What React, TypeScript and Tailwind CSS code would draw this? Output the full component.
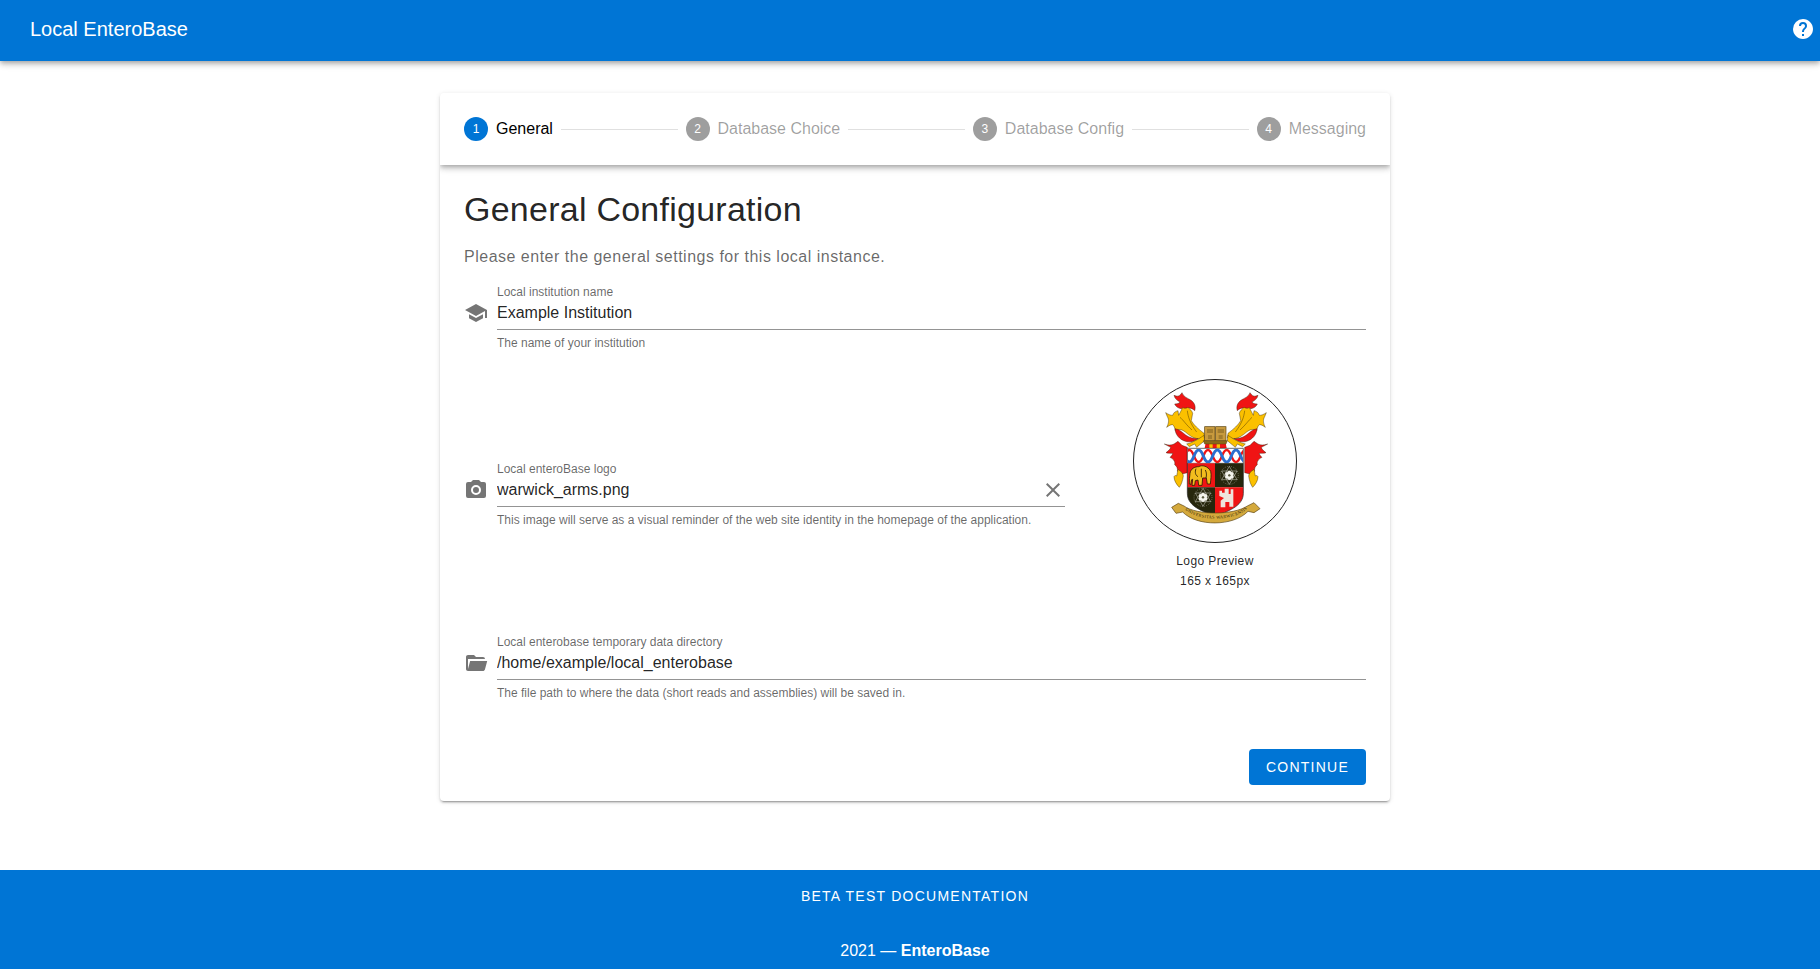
const ICONS = {
  school: 'M12,3L1,9L12,15L21,10.09V17H23V9M5,13.18V17.18L12,21L19,17.18V13.18L12,17L5,13.18Z',
  camera:
    'M4,4H7L9,2H15L17,4H20A2,2 0 0,1 22,6V18A2,2 0 0,1 20,20H4A2,2 0 0,1 2,18V6A2,2 0 0,1 4,4M12,7A5,5 0 0,0 7,12A5,5 0 0,0 12,17A5,5 0 0,0 17,12A5,5 0 0,0 12,7M12,9A3,3 0 0,1 15,12A3,3 0 0,1 12,15A3,3 0 0,1 9,12A3,3 0 0,1 12,9Z',
  folder:
    'M19,20H4C2.89,20 2,19.1 2,18V6C2,4.89 2.89,4 4,4H10L12,6H19A2,2 0 0,1 21,8H21L4,8V18L6.14,10H23.21L20.93,18.5C20.7,19.37 19.92,20 19,20Z',
  close:
    'M19,6.41L17.59,5L12,10.59L6.41,5L5,6.41L10.59,12L5,17.59L6.41,19L12,13.41L17.59,19L19,17.59L13.41,12L19,6.41Z',
  help: 'M15.07,11.25L14.17,12.17C13.45,12.89 13,13.5 13,15H11V14.5C11,13.39 11.45,12.39 12.17,11.67L13.41,10.41C13.78,10.05 14,9.55 14,9C14,7.89 13.1,7 12,7A2,2 0 0,0 10,9H8A4,4 0 0,1 12,5A4,4 0 0,1 16,9C16,9.88 15.64,10.67 15.07,11.25M13,19H11V17H13M12,2A10,10 0 0,0 2,12C2,17.52 6.48,22 12,22C17.52,22 22,17.52 22,12C22,6.47 17.5,2 12,2Z',
};

function Icon({ path, className }: { path: string; className: string }) {
  return (
    <svg viewBox="0 0 24 24" className={className} fill="currentColor">
      <path d={path} />
    </svg>
  );
}

const STEPS = ['General', 'Database Choice', 'Database Config', 'Messaging'];

function Stepper() {
  return (
    <div className="flex h-[72px] items-center gap-2 px-6 shadow-[0_2px_4px_-1px_rgba(0,0,0,0.2),0_4px_5px_0_rgba(0,0,0,0.14),0_1px_10px_0_rgba(0,0,0,0.12)] [clip-path:inset(0_0_-12px_0)]">
      {STEPS.map((step, index) => (
        <div key={step} className="contents">
          <span
            className={
              index === 0
                ? 'grid h-6 w-6 place-items-center rounded-full bg-[#0075d5] text-xs text-white'
                : 'grid h-6 w-6 place-items-center rounded-full bg-black/38 text-xs text-white'
            }
          >
            {index + 1}
          </span>
          <span className={index === 0 ? 'text-base text-black' : 'text-base text-black/38'}>{step}</span>
          {index < 3 ? <span className="h-px flex-1 bg-black/12" /> : null}
        </div>
      ))}
    </div>
  );
}

interface FieldProps {
  icon: string;
  label: string;
  value: string;
  hint: string;
  clearable?: boolean;
}

function Field({ icon, label, value, hint, clearable = false }: FieldProps) {
  return (
    <div className="flex flex-1 items-start gap-[9px]">
      <Icon path={icon} className="mt-[16px] h-6 w-6 shrink-0 text-black/54" />
      <div className="flex-1">
        <label className="block h-[15px] text-xs leading-[15px] text-black/60">{label}</label>
        <div className="flex h-[30px] items-center border-b border-black/42">
          <input
            readOnly
            value={value}
            className="h-full min-w-0 flex-1 bg-transparent pb-1 text-base text-black/87 outline-none"
          />
          {clearable ? <Icon path={ICONS.close} className="mb-1 h-6 w-6 shrink-0 text-black/54" /> : null}
        </div>
        <p className="mt-[6px] text-xs leading-[14px] text-black/60">{hint}</p>
      </div>
    </div>
  );
}

function CrestRose({ x, y }: { x: number; y: number }) {
  return (
    <g transform={`translate(${x} ${y})`}>
      <g fill="none" stroke="#d8d8d0" strokeWidth="1.5">
        <circle r="27" strokeDasharray="2 4" />
        <path d="M0 -27L23 13H-23ZM0 27L23 -13H-23Z" />
      </g>
      <g fill="#f4f4ec">
        <circle cx="0" cy="-8" r="6" />
        <circle cx="7" cy="-4" r="6" />
        <circle cx="7" cy="4" r="6" />
        <circle cx="0" cy="8" r="6" />
        <circle cx="-7" cy="4" r="6" />
        <circle cx="-7" cy="-4" r="6" />
      </g>
      <circle r="3.5" fill="#5a5a40" />
    </g>
  );
}

function Crest() {
  const mantling = (
    <g stroke="#2b1d05" strokeWidth="1.2" strokeLinejoin="round">
      {/* upper flame */}
      <path
        fill="#f01414"
        d="M222 76C232 80 238 80 246 68C250 80 262 84 272 90C284 98 288 110 284 122C276 114 266 112 254 116C240 118 228 112 224 102C232 102 238 100 240 96C232 92 224 86 222 76Z"
      />
      {/* yellow leaves */}
      <path
        fill="#fbc000"
        d="M197 128C206 134 212 136 218 136C220 128 226 124 234 122L236 136C240 128 246 118 248 112C252 116 258 116 264 112C270 118 276 122 278 130L274 152C282 166 294 176 312 190L314 204L292 206C278 204 268 196 256 186C246 178 236 176 226 182C224 172 222 168 218 164C212 164 208 166 200 172C206 160 208 150 202 140Z"
      />
      <path fill="none" d="M240 142C250 150 258 164 276 180M262 122C264 140 270 160 290 186" />
      {/* red ribbon under the leaves */}
      <path
        fill="#f01414"
        d="M225 176C238 178 246 186 258 196C270 204 282 206 294 206C284 214 270 218 256 214C238 208 226 194 225 176Z"
      />
      {/* small yellow tail next to the book */}
      <path fill="#fbc000" d="M260 222C276 218 292 210 312 196L314 212L290 232L284 222L268 230Z" />
      {/* lower flame */}
      <path
        fill="#f01414"
        d="M193 222C206 226 214 226 222 222L234 214L246 226L262 232V308L246 312C244 304 238 300 232 304C234 296 230 288 224 284C226 276 222 268 210 262C214 258 218 254 218 250C210 250 204 250 198 248C206 242 212 236 212 232Z"
      />
      <path fill="#fbc000" d="M234 298C242 304 250 310 250 318C248 332 244 344 238 352C230 344 222 332 222 320C224 316 228 316 230 318C232 312 232 304 234 298Z" />
    </g>
  );

  return (
    <svg viewBox="99 27 492 492" className="h-[164px] w-[164px]">
      <defs>
        <clipPath id="crest-chief">
          <rect x="263" y="236" width="166" height="43" />
        </clipPath>
      </defs>
      <circle cx="345" cy="273" r="244.5" fill="#fff" stroke="#222" strokeWidth="3" />
      {mantling}
      <g transform="translate(696 0) scale(-1 1)">{mantling}</g>

      {/* wreath and book */}
      <path fill="#f01414" d="M318 214H376L380 234H314Z" />
      <path fill="#fbc000" d="M328 214H338V234H328ZM350 214H360V234H350Z" />
      <path fill="#8a6a1a" stroke="#5a4310" strokeWidth="1.5" d="M310 212H382L378 222H314Z" />
      <rect x="314" y="170" width="31" height="42" fill="#c79a3e" stroke="#5a4310" strokeWidth="2" />
      <rect x="347" y="170" width="31" height="42" fill="#c79a3e" stroke="#5a4310" strokeWidth="2" />
      <path fill="none" stroke="#5a4310" strokeWidth="2" d="M321 180H339M321 186H339M324 198H336M324 204H336M353 180H372M353 186H372M356 198H368M356 204H368" />

      {/* shield */}
      <path fill="#fff" stroke="#222" strokeWidth="2" d="M262 235H430V280H262Z" />
      <g clipPath="url(#crest-chief)" fill="none">
        <path
          stroke="#f01414"
          strokeWidth="7"
          d="M240 276C254 276 254 240 268 240S282 276 296 276S310 240 324 240S338 276 352 276S366 240 380 240S394 276 408 276S422 240 436 240"
        />
        <path
          stroke="#2a6fd0"
          strokeWidth="9"
          d="M240 240C254 240 254 276 268 276S282 240 296 240S310 276 324 276S338 240 352 240S366 276 380 276S394 240 408 240S422 276 436 276"
        />
      </g>
      <path fill="#f01414" d="M262 280H345V352H262Z" />
      <path fill="#26260c" d="M345 280H430V352H345Z" />
      <path fill="#26260c" d="M262 352H345V438C310 425 262 410 262 370Z" />
      <path fill="#f01414" d="M345 352H430V370C430 410 380 425 345 438Z" />
      <path fill="none" stroke="#222" strokeWidth="2" d="M262 280V370C262 410 310 425 346 438C380 425 430 410 430 370V280" />

      {/* elephant */}
      <path
        fill="#f2bd1e"
        stroke="#2b1d05"
        strokeWidth="2.5"
        d="M270 310C272 296 284 290 296 290C306 284 324 288 332 304C335 314 332 330 331 342H322L319 324H308L306 346H296L294 330L286 332L284 346H276L278 328C274 326 274 334 272 344L268 342C268 332 268 320 270 310Z"
      />
      <path fill="none" stroke="#2b1d05" strokeWidth="2.5" d="M288 296C284 306 286 316 294 320M304 296V322M316 300C320 308 320 316 318 324" />

      <CrestRose x={388} y={316} />
      <CrestRose x={309} y={382} />

      {/* castle */}
      <path
        fill="#eee5dc"
        d="M358 362H366V368H374V356H386V372H392V358H400V410H388V396H376V412H362V392L372 384L358 378Z"
      />

      {/* scroll */}
      <path
        fill="#d4a93c"
        stroke="#5a4310"
        strokeWidth="2"
        d="M215 412L235 400L252 408C290 436 400 436 442 408L462 398L480 416L462 428L444 424C400 470 290 470 248 426L228 430Z"
      />
      <path id="crest-motto" fill="none" d="M252 416C290 456 400 456 442 416" />
      <text fontSize="13" fill="#2b1d05" fontFamily='"Liberation Serif", serif' letterSpacing="1">
        <textPath href="#crest-motto" startOffset="2%">
          UNIVERSITAS WARWICENSIS
        </textPath>
      </text>
    </svg>
  );
}

export default function App() {
  return (
    <div className="flex min-h-screen flex-col bg-white font-['Liberation_Sans',sans-serif] text-black/87">
      <header className="z-10 flex h-[61px] items-center justify-between bg-[#0075d5] pr-[5px] pb-1 pl-[30px] text-white shadow-[0_2px_4px_-1px_rgba(0,0,0,0.2),0_4px_5px_0_rgba(0,0,0,0.14),0_1px_10px_0_rgba(0,0,0,0.12)]">
        <h1 className="text-xl">Local EnteroBase</h1>
        <Icon path={ICONS.help} className="h-6 w-6" />
      </header>

      <main className="flex flex-1 justify-center pt-8 pb-[69px] pl-[10px]">
        <div className="w-[950px] rounded bg-white shadow-[0_3px_1px_-2px_rgba(0,0,0,0.2),0_2px_2px_0_rgba(0,0,0,0.14),0_1px_5px_0_rgba(0,0,0,0.12)]">
          <Stepper />
          <div className="px-6 pt-6 pb-4">
            <h2 className="text-[34px] leading-10 tracking-[0.25px]">General Configuration</h2>
            <p className="mt-4 text-base leading-6 tracking-[0.5px] text-black/60">
              Please enter the general settings for this local instance.
            </p>

            <div className="mt-4">
              <Field icon={ICONS.school} label="Local institution name" value="Example Institution" hint="The name of your institution" />
            </div>

            <div className="mt-[29px] flex items-center gap-[68px]">
              <div className="flex flex-1 pt-[19px]">
                <Field
                  icon={ICONS.camera}
                  label="Local enteroBase logo"
                  value="warwick_arms.png"
                  hint="This image will serve as a visual reminder of the web site identity in the homepage of the application."
                  clearable
                />
              </div>
              <div className="mr-[69px] flex w-[164px] flex-col items-center text-xs leading-5 tracking-[0.4px] text-black/87">
                <Crest />
                <p className="mt-2">Logo Preview</p>
                <p>165 x 165px</p>
              </div>
            </div>

            <div className="mt-[44px]">
              <Field
                icon={ICONS.folder}
                label="Local enterobase temporary data directory"
                value="/home/example/local_enterobase"
                hint="The file path to where the data (short reads and assemblies) will be saved in."
              />
            </div>

            <div className="mt-[49px] flex justify-end">
              <button type="button" className="h-9 w-[117px] rounded bg-[#0075d5] text-sm tracking-[1.25px] text-white">
                CONTINUE
              </button>
            </div>
          </div>
        </div>
      </main>

      <footer className="flex h-[99px] flex-col items-center bg-[#0075d5] pl-[10px] text-white">
        <a className="mt-[18px] text-sm leading-4 tracking-[1.25px]">BETA TEST DOCUMENTATION</a>
        <p className="mt-[35px] text-base leading-6">
          2021 — <strong className="font-bold">EnteroBase</strong>
        </p>
      </footer>
    </div>
  );
}
